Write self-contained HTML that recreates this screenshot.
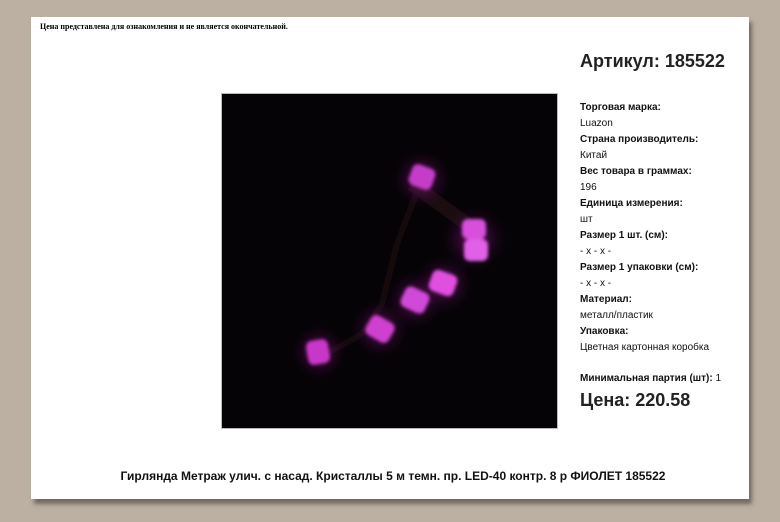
<!DOCTYPE html>
<html><head><meta charset="utf-8"><style>
body{margin:0;width:780px;height:522px;background:#bcb0a3;position:relative;overflow:hidden;font-family:"Liberation Sans",sans-serif;color:#222}
.page{position:absolute;left:31px;top:17px;width:718px;height:482px;background:#fff;box-shadow:3px 5px 4px rgba(60,50,40,.55)}
.note{position:absolute;left:40px;top:22px;font-family:"Liberation Serif",serif;font-size:8px;font-weight:bold;color:#000}
.art{position:absolute;left:580px;top:51px;font-size:18px;font-weight:bold;color:#222}
.img{position:absolute;left:221px;top:93px;width:335px;height:334px;background:#050305;border:1px solid #bbb}
.info{position:absolute;left:580px;top:100px;font-size:10px;line-height:16px;color:#111}
.info b{display:block}
.min{position:absolute;left:580px;top:373px;font-size:10px;color:#111}
.price{position:absolute;left:580px;top:390px;font-size:18px;font-weight:bold;color:#222}
.title{position:absolute;left:3px;width:780px;text-align:center;top:469px;font-size:12px;font-weight:bold;color:#111}
</style></head><body>
<div class="page"></div>
<div class="note">Цена представлена для ознакомления и не является окончательной.</div>
<div class="art">Артикул: 185522</div>
<div class="img"><svg width="335" height="334" viewBox="0 0 335 334">
<defs><radialGradient id="g"><stop offset="0" stop-color="#c020c0" stop-opacity=".55"/><stop offset="1" stop-color="#300030" stop-opacity="0"/></radialGradient>
<filter id="b"><feGaussianBlur stdDeviation="1.5"/></filter></defs>
<path d="M200 85 L175 150 L160 210 L140 240 L95 265" stroke="#140a0c" stroke-width="6" fill="none"/>
<path d="M190 90 L245 130" stroke="#1a0d10" stroke-width="14" fill="none"/>
<g>
<circle cx="200" cy="85" r="30" fill="url(#g)"/>
<circle cx="252" cy="145" r="34" fill="url(#g)"/>
<circle cx="222" cy="190" r="30" fill="url(#g)"/>
<circle cx="193" cy="206" r="30" fill="url(#g)"/>
<circle cx="158" cy="235" r="30" fill="url(#g)"/>
<circle cx="97" cy="258" r="28" fill="url(#g)"/>
<g filter="url(#b)">
<rect x="188" y="72" width="24" height="22" rx="6" fill="#c43cc8" transform="rotate(20 200 83)"/>
<rect x="240" y="125" width="24" height="20" rx="6" fill="#d850dc"/><rect x="242" y="145" width="24" height="22" rx="6" fill="#e060e8"/>
<rect x="208" y="178" width="26" height="22" rx="6" fill="#e050e0" transform="rotate(20 221 189)"/>
<rect x="180" y="195" width="26" height="22" rx="6" fill="#d048d8" transform="rotate(25 193 206)"/>
<rect x="145" y="224" width="26" height="22" rx="6" fill="#d040d0" transform="rotate(30 158 235)"/>
<rect x="85" y="246" width="22" height="24" rx="6" fill="#c838c8" transform="rotate(-10 96 258)"/>
</g></g></svg></div>
<div class="info">
<b>Торговая марка:</b>Luazon
<b>Страна производитель:</b>Китай
<b>Вес товара в граммах:</b>196
<b>Единица измерения:</b>шт
<b>Размер 1 шт. (см):</b>- x - x -
<b>Размер 1 упаковки (см):</b>- x - x -
<b>Материал:</b>металл/пластик
<b>Упаковка:</b>Цветная картонная коробка
</div>
<div class="min"><b>Минимальная партия (шт):</b> 1</div>
<div class="price">Цена: 220.58</div>
<div class="title">Гирлянда Метраж улич. с насад. Кристаллы 5 м темн. пр. LED-40 контр. 8 р ФИОЛЕТ 185522</div>
</body></html>
